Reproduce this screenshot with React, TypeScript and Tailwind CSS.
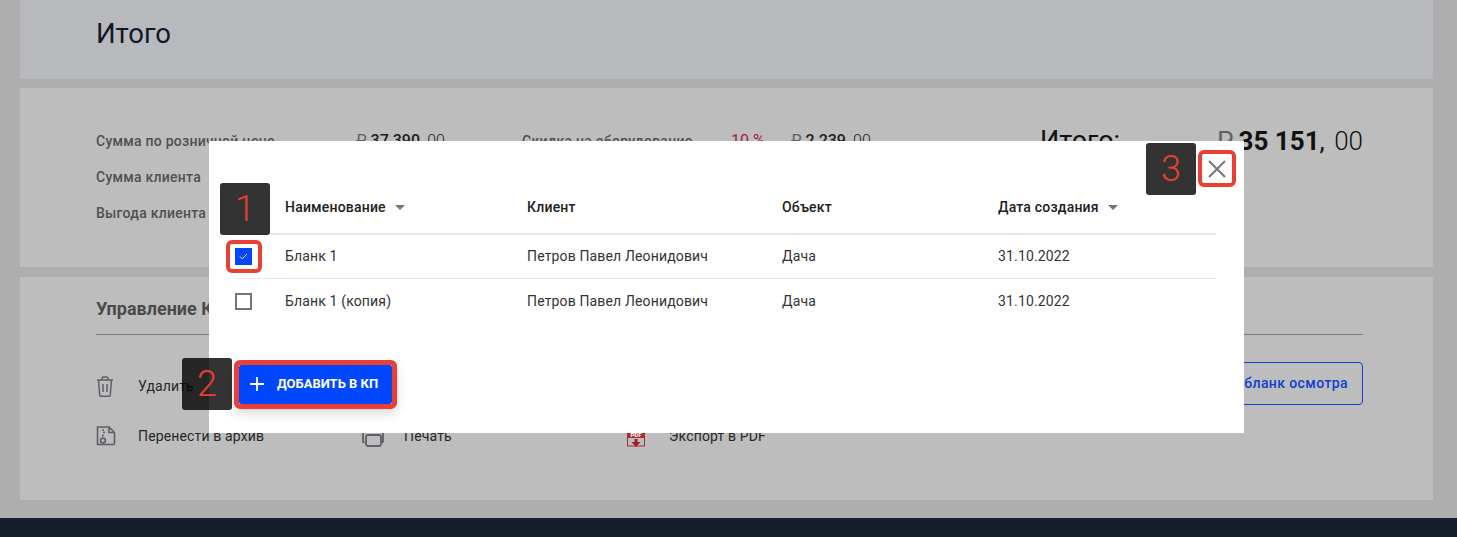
import React from "react";

const font = { fontFamily: "Roboto, sans-serif" };

function Caret() {
  return <span className="ml-[9px] inline-block h-0 w-0 border-x-[5.5px] border-t-[5px] border-x-transparent border-t-[#757575]" />;
}

function Callout({ n, cls }: { n: string; cls: string }) {
  return (
    <div className={`absolute z-20 flex h-[52px] w-[50px] items-center justify-center rounded-[3px] bg-black/80 text-[36px] font-light leading-none text-[#ea3f33] ${cls}`}>
      {n}
    </div>
  );
}

const rows = [
  { name: "Бланк 1", checked: true },
  { name: "Бланк 1 (копия)", checked: false },
];

function TrashIcon() {
  return (
    <svg width="18" height="21" viewBox="0 0 18 21" fill="none" stroke="#5d6068" strokeWidth="1.5">
      <path d="M1 4h16M6 4V2.5c0-.8.6-1.5 1.4-1.5h3.2c.8 0 1.4.7 1.4 1.5V4M2.5 4l1.2 15c0 .7.5 1.2 1.2 1.2h8.2c.7 0 1.2-.5 1.2-1.2L15.5 4" />
      <path d="M7 8v8M11 8v8" />
    </svg>
  );
}

function ArchiveIcon() {
  return (
    <svg width="20" height="20" viewBox="0 0 20 20" fill="none" stroke="#5d6068" strokeWidth="1.6">
      <path d="M1.5 1h11.5l5.5 5.5v11a1 1 0 0 1-1 1h-16z" />
      <path d="M13 1v5.5h5.5" />
      <circle cx="7" cy="14.5" r="2.4" />
      <path d="M6 4h2M7 6.5h2M6 9.5h2" />
    </svg>
  );
}

function PrintIcon() {
  return (
    <svg width="22" height="21" viewBox="0 0 22 21" fill="none" stroke="#5d6068" strokeWidth="1.8">
      <path d="M1 15V5c0-1 .6-1.6 1.6-1.6H19.4c1 0 1.6.6 1.6 1.6v10c0 1-.6 1.6-1.6 1.6" />
      <path d="M1 15c0 1 .6 1.6 1.6 1.6" />
      <rect x="4" y="9" width="15" height="11" rx="2" fill="#bdbdbd" />
    </svg>
  );
}

function PdfIcon() {
  return (
    <svg width="18" height="21" viewBox="0 0 18 21" fill="none">
      <rect x="0.5" y="0.5" width="17" height="19.5" fill="none" stroke="#ad2a33" />
      <rect x="0" y="0" width="18" height="12" fill="#ad2a33" />
      <text x="9" y="10.5" textAnchor="middle" fill="#ffffff" fontSize="6" fontWeight="700" fontFamily="Roboto, sans-serif">PDF</text>
      <path d="M7.5 13h3v3h3l-4.5 5-4.5-5h3z" fill="#9e1f28" />
    </svg>
  );
}

function Action({ icon, text, w }: { icon: React.ReactNode; text: string; w: string }) {
  return (
    <div className={`flex items-center ${w}`}>
      <span className="flex w-[42px] shrink-0 items-center">{icon}</span>
      <span className="text-[14px] tracking-[0.15px] text-[#27272a]">{text}</span>
    </div>
  );
}

export default function App() {
  return (
    <div style={font} className="relative flex h-[537px] w-full flex-col overflow-hidden bg-[#aeaeae]">
      <section className="ml-5 mr-6 flex h-[79px] shrink-0 items-center bg-[#b8b9bd] pl-[76px] pr-[70px] pb-[12px]">
        <h1 className="text-[27.5px] font-normal text-[#111827]">Итого</h1>
      </section>

      <section className="ml-5 mr-6 mt-[9px] flex h-[179px] shrink-0 items-start bg-[#bdbdbd] pl-[76px] pr-[70px] pt-[44px]">
        <div className="flex w-[260px] flex-col gap-[18px] text-[14px] font-medium leading-[18px] tracking-[0.25px] text-[#505050]">
          <span>Сумма по розничной цене</span>
          <span>Сумма клиента</span>
          <span>Выгода клиента</span>
        </div>
        <div className="w-[166px] text-[16px] leading-[18px] text-[#1c1c1c]">
          <span className="text-[#5d6068]">₽</span> <span className="font-medium">37 390</span>, <span className="font-light">00</span>
        </div>
        <div className="w-[209px] text-[14px] font-medium leading-[18px] tracking-[0.25px] text-[#505050]">Скидка на оборудование</div>
        <div className="w-[60px] text-[16px] leading-[18px] text-[#a81c3c]">10 %</div>
        <div className="w-[249px] text-[16px] leading-[18px] text-[#1c1c1c]">
          <span className="text-[#5d6068]">₽</span> <span className="font-medium">2 239</span>, <span className="font-light">00</span>
        </div>
        <div className="-mt-[6px] text-[27px] leading-[30px] text-[#111]">Итого:</div>
        <div className="-mt-[6px] ml-auto whitespace-nowrap text-[26px] leading-[30px] text-[#111]">
          <span className="mr-[5px] text-[#5d6068]">₽</span><span className="font-bold">35 151</span>, <span className="ml-[3px] font-light">00</span>
        </div>
      </section>

      <section className="ml-5 mr-6 mt-[10px] h-[223px] shrink-0 bg-[#bdbdbd] pl-[76px] pr-[70px] pt-[21px]">
        <h2 className="border-b border-[#7a7a7a] pb-[14px] text-[18px] font-bold leading-[22px] text-[#4a4a4a]">Управление КП</h2>
        <div className="mt-[40px] flex h-[22px] items-center">
          <Action icon={<TrashIcon />} text="Удалить" w="w-[266px]" />
          <div className="mb-[5px] ml-auto flex h-[43px] w-[200px] shrink-0 items-center justify-end rounded-[4px] border border-[#0f3fd0] pr-[14px] text-[14px] font-medium tracking-[0.4px] text-[#0f3fd0]">
            бланк осмотра
          </div>
        </div>
        <div className="mt-[28px] flex h-[22px] items-center">
          <Action icon={<ArchiveIcon />} text="Перенести в архив" w="w-[266px]" />
          <Action icon={<PrintIcon />} text="Печать" w="w-[265px]" />
          <Action icon={<PdfIcon />} text="Экспорт в PDF" w="w-[200px]" />
        </div>
      </section>

      <footer className="mt-[18px] flex-1 bg-[#141f2b]" />

      <div className="absolute left-[209px] top-[141px] z-10 flex h-[292px] w-[1035px] flex-col bg-white pl-[27px] pr-[28px] pt-[44px]">
        <div className="flex h-[50px] shrink-0 items-center border-b-2 border-[#e8e8e8] pb-[4px] text-[14px] font-medium tracking-[0.2px] text-[#212121]">
          <div className="flex w-[291px] items-center pl-[49px]">Наименование<Caret /></div>
          <div className="w-[255px]">Клиент</div>
          <div className="w-[216px]">Объект</div>
          <div className="flex items-center">Дата создания<Caret /></div>
        </div>
        {rows.map((r, i) => (
          <div key={r.name} className={`flex h-[44px] shrink-0 items-center text-[14px] tracking-[0.15px] text-[#333333] ${i === 0 ? "border-b border-[#e8e8e8]" : ""}`}>
            <div className="flex w-[291px] items-center">
              <span className={`-ml-px flex h-[17px] w-[17px] shrink-0 items-center justify-center border-2 ${r.checked ? "border-[#0047ff] bg-[#0047ff]" : "border-[#757575] bg-white"}`}>
                {r.checked && (
                  <svg width="9" height="7" viewBox="0 0 10 8" fill="none" stroke="white" strokeWidth="1"><path d="M1 4l2.6 2.8L9 1" /></svg>
                )}
              </span>
              <span className="ml-[33px]">{r.name}</span>
            </div>
            <div className="w-[255px]">Петров Павел Леонидович</div>
            <div className="w-[216px]">Дача</div>
            <div>31.10.2022</div>
          </div>
        ))}
        <div className="mt-[42px] flex">
          <button className="ml-[3px] flex h-[39px] w-[153px] items-center rounded-[2px] bg-[#0047ff] pb-px pl-[11px] text-[13px] font-bold text-white">
            <svg width="14" height="14" viewBox="0 0 14 14" stroke="white" strokeWidth="1.8"><path d="M7 0v14M0 7h14" /></svg>
            <span className="ml-[13px] whitespace-nowrap">ДОБАВИТЬ В КП</span>
          </button>
        </div>
      </div>

      <div className="absolute left-[226px] top-[240px] z-20 h-[33px] w-[36px] rounded-[6px] border-[4px] border-[#ea3f33]" />
      <div className="absolute left-[234px] top-[360px] z-20 h-[49px] w-[163px] rounded-[6px] border-[5px] border-[#ea3f33] shadow-[0_5px_12px_rgba(0,0,0,0.14)]" />
      <button className="absolute left-[1198px] top-[150px] z-20 flex h-[37px] w-[38px] items-center justify-center rounded-[6px] border-[4px] border-[#ea3f33] bg-white">
        <svg width="18" height="18" viewBox="0 0 18 18" stroke="#757575" strokeWidth="2"><path d="M1 1l16 16M17 1L1 17" /></svg>
      </button>

      <Callout n="1" cls="left-[220px] top-[183px]" />
      <Callout n="2" cls="left-[182px] top-[358px]" />
      <Callout n="3" cls="left-[1146px] top-[143px]" />
    </div>
  );
}
